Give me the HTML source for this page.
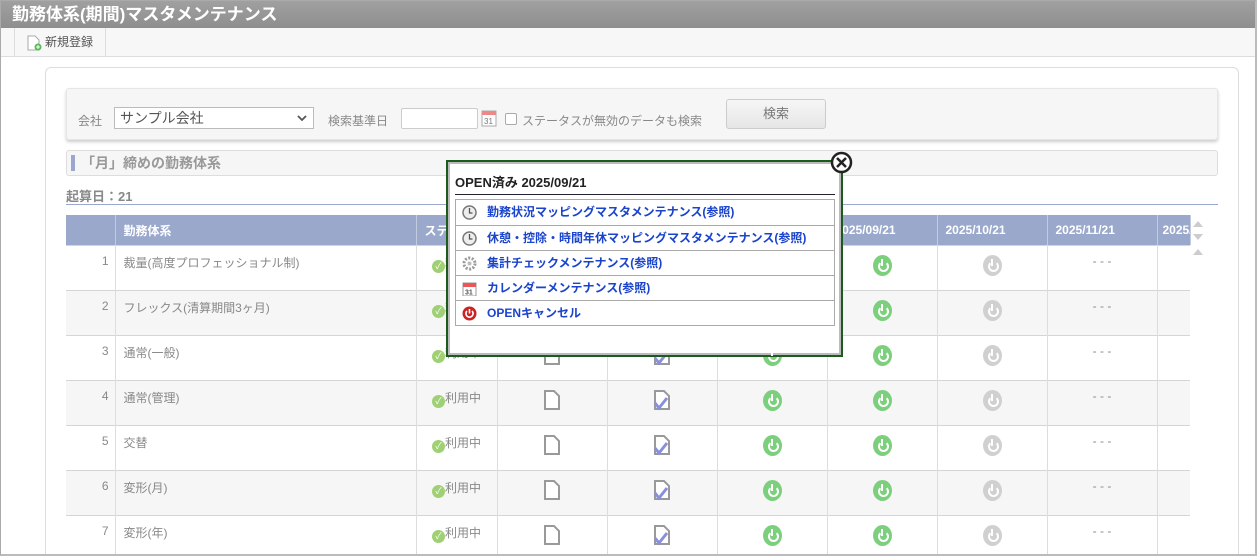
<!DOCTYPE html>
<html><head><meta charset="utf-8"><style>
*{box-sizing:border-box;margin:0;padding:0}
html,body{width:1257px;height:556px;overflow:hidden}
body{background:#fff;font-family:"Liberation Sans","Noto Sans CJK JP",sans-serif;font-size:12px;color:#888;position:relative}
.frame{position:absolute;left:0;top:0;width:1257px;height:556px;border:1px solid #aaa;border-right:2px solid #bbb;border-bottom:2px solid #bbb;z-index:5;pointer-events:none}
.title{position:absolute;left:1px;top:1px;width:1254px;height:27px;background:linear-gradient(#a0a0a0,#8e8e8e);color:#fff;font-weight:bold;font-size:17px;line-height:27px;padding-left:11px}
.tool{position:absolute;left:1px;top:28px;width:1254px;height:29px;background:#f7f7f7;border-bottom:1px solid #ddd}
.tbtn{position:absolute;left:13px;top:0;width:92px;height:28px;border-left:1px solid #ddd;border-right:1px solid #ddd;font-size:12px;color:#555;line-height:28px;padding-left:30px}
.panel{position:absolute;left:45px;top:67px;width:1194px;height:500px;border:1px solid #ddd;border-radius:6px;background:#fff}
.search{position:absolute;left:66px;top:88px;width:1152px;height:52px;background:#f6f6f6;border:1px solid #e6e6e6;border-radius:3px;box-shadow:0 2px 3px #ccc}
.sec{position:absolute;left:66px;top:150px;width:1152px;height:26px;background:#f6f6f6;border:1px solid #ddd;border-radius:3px;font-size:14px;font-weight:bold;color:#999;line-height:24px;padding-left:14px}
.sec:before{content:"";position:absolute;left:4px;top:4px;width:4px;height:16px;background:#99a8cc}
.kisan{position:absolute;left:66px;top:186px;width:1152px;height:19px;border-bottom:1px solid #99a8cc;font-weight:bold;font-size:13px;color:#888}
table{position:absolute;left:66px;top:215px;border-collapse:collapse;table-layout:fixed;width:1124px}
th{background:#9aa8cc;color:#fff;height:30px;font-size:12px;text-align:left;padding-left:8px;border-right:1px solid #c2cbe0;overflow:hidden;white-space:nowrap}
td{height:45px;border-top:1px solid #d5d5d5;border-right:1px solid #ddd;vertical-align:top;padding-top:8px;font-size:12px;color:#888}
td:last-child{border-right:0}
tr.g td{background:#f6f6f6}
.n{text-align:right;padding-right:6px}
.nm{padding-left:8px}
.c{text-align:center}
.ok{display:inline-block;width:13px;height:13px;border-radius:50%;background:#9fd073;color:#fff;font-size:9px;line-height:13px;text-align:center;vertical-align:-2px}
.pw{display:inline-block;width:19px;height:21px;border-radius:50%;background:#7ccf7c;position:relative;margin-top:1px}
.pw.gr{background:#d0d0d0}
.pw:after{content:"";position:absolute;left:5px;top:6px;width:7px;height:7px;border:2px solid #fff;border-top-color:transparent;border-radius:50%}
.pw:before{content:"";position:absolute;left:8.5px;top:4px;width:2px;height:7px;background:#fff;z-index:1}
.pop{position:absolute;left:446px;top:160px;width:397px;height:197px;border:2px solid #1d5a1d;background:#fff;box-shadow:inset 0 0 0 2px #bbb}
.pop h3{position:absolute;left:7px;top:10px;width:380px;font-size:13px;color:#222;border-bottom:1px solid #223;padding-bottom:3px}
.pop ul{position:absolute;left:7px;top:37px;width:380px;list-style:none;border:1px solid #aaa}
.pop li{height:25px;border-top:1px solid #aaa;font-size:12px;font-weight:bold;color:#1a44cc;line-height:24px;padding-left:31px;position:relative}
.pop li:first-child{border-top:0}
.ic{position:absolute;left:6px;top:5px;width:15px;height:15px}
.close{position:absolute;left:830px;top:151px;width:23px;height:23px}
</style></head><body>
<div class="frame"></div>
<div class="title">勤務体系(期間)マスタメンテナンス</div>
<div class="tool"><div class="tbtn"><svg style="position:absolute;left:11px;top:7px" width="16" height="16"><path d="M2 1h7l4 4v10H2z" fill="#fff" stroke="#aaa"/><circle cx="12" cy="12" r="3.5" fill="#5b5"/><path d="M12 10v4M10 12h4" stroke="#fff"/></svg>新規登録</div></div>
<div class="panel"></div>
<div class="search">
<span style="position:absolute;left:11px;top:23px">会社</span>
<div style="position:absolute;left:47px;top:18px;width:200px;height:22px;border:1px solid #bbb;background:#fff;font-size:14px;color:#555;line-height:20px;padding-left:5px">サンプル会社<svg style="position:absolute;right:6px;top:7px" width="10" height="7"><path d="M1 1l4 4 4-4" fill="none" stroke="#555" stroke-width="1.8"/></svg></div>
<span style="position:absolute;left:261px;top:23px">検索基準日</span>
<div style="position:absolute;left:334px;top:19px;width:77px;height:21px;border:1px solid #ccc;background:#fff;border-radius:2px"></div>
<svg style="position:absolute;left:414px;top:20px" width="16" height="18"><rect x="1" y="2" width="14" height="15" fill="#fff" stroke="#aaa"/><rect x="1" y="2" width="14" height="4" fill="#e88"/><text x="3" y="15" font-size="8" fill="#777" font-family="Liberation Sans">31</text></svg>
<div style="position:absolute;left:438px;top:24px;width:12px;height:12px;border:1px solid #aaa;border-radius:2px;background:#fff"></div>
<span style="position:absolute;left:455px;top:23px">ステータスが無効のデータも検索</span>
<div style="position:absolute;left:659px;top:10px;width:100px;height:30px;border:1px solid #ccc;border-radius:3px;background:linear-gradient(#f6f6f6,#e6e6e6);text-align:center;line-height:28px;font-size:13px;color:#777">検索</div>
</div>
<div class="sec">「月」締めの勤務体系</div>
<div class="kisan">起算日：21</div>
<table>
<colgroup><col style="width:49px"><col style="width:301px"><col style="width:81px"><col style="width:110px"><col style="width:110px"><col style="width:110px"><col style="width:110px"><col style="width:110px"><col style="width:110px"><col style="width:33px"></colgroup>
<tr><th></th><th>勤務体系</th><th>ステータス</th><th></th><th></th><th></th><th>2025/09/21</th><th>2025/10/21</th><th>2025/11/21</th><th style="padding-left:5px">2025/12/21</th></tr>
</table>
<table style="top:245px">
<colgroup><col style="width:49px"><col style="width:301px"><col style="width:81px"><col style="width:110px"><col style="width:110px"><col style="width:110px"><col style="width:110px"><col style="width:110px"><col style="width:110px"><col style="width:33px"></colgroup>
<tr><td class="n">1</td><td class="nm">裁量(高度プロフェッショナル制)</td><td class="c"><span class="ok">✓</span>利用中</td><td class="c"></td><td class="c"></td><td class="c"></td><td class="c"><span class="pw"></span></td><td class="c"><span class="pw gr"></span></td><td class="c">- - -</td><td></td></tr>
<tr class="g"><td class="n">2</td><td class="nm">フレックス(清算期間3ヶ月)</td><td class="c"><span class="ok">✓</span>利用中</td><td class="c"></td><td class="c"></td><td class="c"></td><td class="c"><span class="pw"></span></td><td class="c"><span class="pw gr"></span></td><td class="c">- - -</td><td></td></tr>
<tr><td class="n">3</td><td class="nm">通常(一般)</td><td class="c"><span class="ok">✓</span>利用中</td><td class="c"><svg width="18" height="22"><path d="M2 2h9l5 5v13H2z" fill="#fff" stroke="#999" stroke-width="2"/></svg></td><td class="c"><svg width="18" height="22"><path d="M2 2h9l5 5v13H2z" fill="#fff" stroke="#999" stroke-width="2"/><path d="M2 14l4 5 8-10" fill="none" stroke="#8890dd" stroke-width="3"/></svg></td><td class="c"><span class="pw"></span></td><td class="c"><span class="pw"></span></td><td class="c"><span class="pw gr"></span></td><td class="c">- - -</td><td></td></tr>
<tr class="g"><td class="n">4</td><td class="nm">通常(管理)</td><td class="c"><span class="ok">✓</span>利用中</td><td class="c"><svg width="18" height="22"><path d="M2 2h9l5 5v13H2z" fill="#fff" stroke="#999" stroke-width="2"/></svg></td><td class="c"><svg width="18" height="22"><path d="M2 2h9l5 5v13H2z" fill="#fff" stroke="#999" stroke-width="2"/><path d="M2 14l4 5 8-10" fill="none" stroke="#8890dd" stroke-width="3"/></svg></td><td class="c"><span class="pw"></span></td><td class="c"><span class="pw"></span></td><td class="c"><span class="pw gr"></span></td><td class="c">- - -</td><td></td></tr>
<tr><td class="n">5</td><td class="nm">交替</td><td class="c"><span class="ok">✓</span>利用中</td><td class="c"><svg width="18" height="22"><path d="M2 2h9l5 5v13H2z" fill="#fff" stroke="#999" stroke-width="2"/></svg></td><td class="c"><svg width="18" height="22"><path d="M2 2h9l5 5v13H2z" fill="#fff" stroke="#999" stroke-width="2"/><path d="M2 14l4 5 8-10" fill="none" stroke="#8890dd" stroke-width="3"/></svg></td><td class="c"><span class="pw"></span></td><td class="c"><span class="pw"></span></td><td class="c"><span class="pw gr"></span></td><td class="c">- - -</td><td></td></tr>
<tr class="g"><td class="n">6</td><td class="nm">変形(月)</td><td class="c"><span class="ok">✓</span>利用中</td><td class="c"><svg width="18" height="22"><path d="M2 2h9l5 5v13H2z" fill="#fff" stroke="#999" stroke-width="2"/></svg></td><td class="c"><svg width="18" height="22"><path d="M2 2h9l5 5v13H2z" fill="#fff" stroke="#999" stroke-width="2"/><path d="M2 14l4 5 8-10" fill="none" stroke="#8890dd" stroke-width="3"/></svg></td><td class="c"><span class="pw"></span></td><td class="c"><span class="pw"></span></td><td class="c"><span class="pw gr"></span></td><td class="c">- - -</td><td></td></tr>
<tr><td class="n">7</td><td class="nm">変形(年)</td><td class="c"><span class="ok">✓</span>利用中</td><td class="c"><svg width="18" height="22"><path d="M2 2h9l5 5v13H2z" fill="#fff" stroke="#999" stroke-width="2"/></svg></td><td class="c"><svg width="18" height="22"><path d="M2 2h9l5 5v13H2z" fill="#fff" stroke="#999" stroke-width="2"/><path d="M2 14l4 5 8-10" fill="none" stroke="#8890dd" stroke-width="3"/></svg></td><td class="c"><span class="pw"></span></td><td class="c"><span class="pw"></span></td><td class="c"><span class="pw gr"></span></td><td class="c">- - -</td><td></td></tr>
</table>
<svg style="position:absolute;left:1192px;top:219px;z-index:3" width="12" height="40"><path d="M1 8l5-6 5 6z M1 15l5 6 5-6z M1 36l5-6 5 6z" fill="#ccc"/></svg>
<div class="pop">
<h3>OPEN済み 2025/09/21</h3>
<ul>
<li><svg class="ic"><circle cx="7.5" cy="7.5" r="6.5" fill="#eee" stroke="#777" stroke-width="1.5"/><path d="M7.5 3v5h3" fill="none" stroke="#555" stroke-width="1.3"/></svg>勤務状況マッピングマスタメンテナンス(参照)</li>
<li><svg class="ic"><circle cx="7.5" cy="7.5" r="6.5" fill="#eee" stroke="#777" stroke-width="1.5"/><path d="M7.5 3v5h3" fill="none" stroke="#555" stroke-width="1.3"/></svg>休憩・控除・時間年休マッピングマスタメンテナンス(参照)</li>
<li><svg class="ic"><circle cx="7.5" cy="7.5" r="5.5" fill="none" stroke="#999" stroke-width="3" stroke-dasharray="2 1.5"/><circle cx="7.5" cy="7.5" r="2" fill="#bbb"/></svg>集計チェックメンテナンス(参照)</li>
<li><svg class="ic"><rect x="1" y="2" width="13" height="13" fill="#fff" stroke="#999"/><rect x="1" y="2" width="13" height="4" fill="#e55"/><text x="3" y="13.5" font-size="7" fill="#555" font-family="Liberation Sans">31</text></svg>カレンダーメンテナンス(参照)</li>
<li><svg class="ic"><circle cx="7.5" cy="7.5" r="7" fill="#c22"/><path d="M5 5a3.6 3.6 0 1 0 5 0" fill="none" stroke="#fff" stroke-width="1.6"/><path d="M7.5 3v4.5" stroke="#fff" stroke-width="1.6"/></svg>OPENキャンセル</li>
</ul>
</div>
<svg class="close" viewBox="0 0 23 23"><circle cx="11.5" cy="11.5" r="9.5" fill="#fff" stroke="#222" stroke-width="2.5"/><path d="M7 7l9 9M16 7l-9 9" stroke="#222" stroke-width="2.5"/></svg>
</body></html>
